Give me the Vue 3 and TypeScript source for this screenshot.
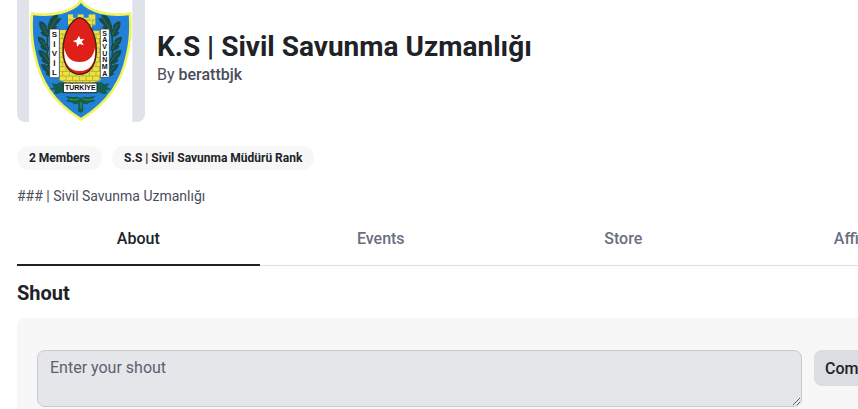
<script setup lang="ts">
import { ref } from 'vue'

interface Tab {
  id: string
  label: string
}

const tabs: Tab[] = [
  { id: 'about', label: 'About' },
  { id: 'events', label: 'Events' },
  { id: 'store', label: 'Store' },
  { id: 'affiliates', label: 'Affiliates' },
]
const activeTab = ref('about')
const shout = ref('')

const leftLetters = [
  { char: 'S', y: 111 },
  { char: 'İ', y: 140 },
  { char: 'V', y: 168 },
  { char: 'İ', y: 197 },
  { char: 'L', y: 226 },
]
const rightLetters = 'SAVUNMA'.split('').map((char, i) => ({ char, y: 107 + i * 20 }))
const brickRows = Array.from({ length: 14 }, (_, i) => 60 + i * 14)
</script>

<template>
  <div class="page">
    <main class="content">
      <header class="group-header">
        <div class="thumbnail">
          <svg class="emblem" viewBox="21 -18 384 384" role="img" aria-label="Sivil Savunma">
            <defs>
              <clipPath id="castle">
                <path d="M174 43h15v10h14v-10h18v10h15v-10h20v33h-10v16h26v148q-28 13-62 13t-62-13V90h33V76h-7z" />
              </clipPath>
              <g id="branch">
                <path d="M120 70Q100 150 123 225" fill="none" stroke="#174b45" stroke-width="5" />
                <path d="M145 44Q124 43 117 65q-7 14-4 30q23 0 29-16l-7-2q14-8 19-24l-11 3z" />
                <path d="M88 64q16 0 22 14l-1 7q12 8 6 27q-19-1-24-16l6-1q-12-12-9-31z" />
                <path d="M83 110q16 0 23 12l-1 6q16 7 11 25q-20 0-26-15l5-2q-12-10-12-26z" />
                <path d="M85 150q17 0 24 12l1 6q13 6 11 24q-20 2-28-13l5-3q-14-10-13-26z" />
                <path d="M93 192q18 0 24 10l1 7q17 2 20 19q-20 7-32-7l4-4q-14-8-17-25z" />
                <path d="M96 73l16 32M92 119l21 28M96 158l22 28M104 199l25 24M141 53l-22 35" fill="none" stroke="#3b8058" stroke-width="2" />
              </g>
            </defs>
            <rect x="57" y="-18" width="310" height="384" fill="#fff" />
            <path
              d="M213 3C190 35 125 51 66 41Q61 111 75 166C91 244 130 307 213 358C296 307 335 244 351 166Q365 111 360 41C301 51 236 35 213 3Z"
              fill="#2280d8"
              stroke="#f3f45c"
              stroke-width="8"
              stroke-linejoin="round"
            />
            <use href="#branch" fill="#174b45" />
            <use href="#branch" fill="#174b45" transform="translate(419 0) scale(-1 1)" />
            <g clip-path="url(#castle)">
              <rect x="140" y="38" width="140" height="220" fill="#eee240" />
              <g stroke="#a59a35" stroke-width="2">
                <path v-for="y in brickRows" :key="y" :d="`M140 ${y}H280`" />
                <path
                  v-for="(y, i) in brickRows"
                  :key="`joint-${y}`"
                  :d="`M${148 + (i % 2) * 10} ${y}v14m20-14v14m20-14v14m20-14v14m20-14v14m20-14v14m20-14v14`"
                />
              </g>
            </g>
            <path d="M209 53C182 57 159 106 159 150C159 194 178 223 209 223C240 223 259 194 259 150C259 106 236 57 209 53Z" fill="#df2018" stroke="#3a2410" stroke-width="4" />
            <path d="M163 143C159 188 177 213 209 213C241 213 259 188 255 143C250 171 234 186 209 186C184 186 168 171 163 143Z" fill="#fff" />
            <path d="M207 107l4 11 12-2-8 9 7 11-13-4-8 8-1-12-12-5 12-4z" fill="#fff" />
            <path d="M119 87h29v146h-29zM271 87h27v145h-27z" fill="#fff" stroke="#26352d" stroke-width="2" />
            <g class="emblem-text">
              <text v-for="letter in leftLetters" :key="letter.y" x="133" :y="letter.y" font-size="24">{{ letter.char }}</text>
              <text v-for="letter in rightLetters" :key="letter.y" x="284" :y="letter.y" font-size="21">{{ letter.char }}</text>
            </g>
            <g fill="#125f4d">
              <path d="M161 249q-13-5-21 3l-15-2 7 12-14 5 17 4-3 10q19 3 29-7zM262 249q13-5 21 3l15-2-7 12 14 5-17 4 3 10q-19 3-29-7z" />
              <path d="M211 295q-10-7-20-3l-24-4 9 10-10 5 21 5 5 5 13-2-1 23 8 4 8-4-1-23 12 2 6-5 20-5-10-5 9-10-21 4q-13-5-24 3z" />
            </g>
            <path d="M178 297q18 6 29-1m40 1q-18 6-29-1M213 306v20" fill="none" stroke="#43a43e" stroke-width="3" />
            <rect x="160" y="249" width="101" height="29" fill="#fff" stroke="#17251f" stroke-width="3" />
            <text class="emblem-text" x="211" y="271" font-size="21">TÜRKİYE</text>
          </svg>
        </div>
        <div class="group-title">
          <h1>K.S | Sivil Savunma Uzmanlığı</h1>
          <p>By <a href="#owner">berattbjk</a></p>
        </div>
      </header>

      <div class="badges">
        <span class="badge">2 Members</span>
        <span class="badge">S.S | Sivil Savunma Müdürü Rank</span>
      </div>
      <p class="description">### | Sivil Savunma Uzmanlığı</p>

      <nav class="tabs" role="tablist">
        <button
          v-for="tab in tabs"
          :key="tab.id"
          type="button"
          role="tab"
          class="tab"
          :class="{ active: activeTab === tab.id }"
          :aria-selected="activeTab === tab.id"
          @click="activeTab = tab.id"
        >
          {{ tab.label }}
        </button>
      </nav>

      <section>
        <h2>Shout</h2>
        <form class="shout-card" @submit.prevent>
          <textarea v-model="shout" aria-label="Enter your shout" placeholder="Enter your shout"></textarea>
          <button type="submit" class="shout-button">Community Shout</button>
        </form>
      </section>
    </main>
  </div>
</template>

<style>
html {
  scrollbar-width: none;
}
body {
  background: #fff;
}
</style>

<style scoped>
.page {
  box-sizing: border-box;
  padding: 0 17px;
  overflow: hidden;
  color: #202227;
  font-family: Roboto, "Noto Sans", sans-serif;
  font-size: 16px;
  line-height: 24px;
}
.content {
  min-width: 970px;
}
h1,
h2,
p {
  margin: 0;
}
button,
textarea {
  font: inherit;
}
.group-header {
  display: flex;
  align-items: center;
  gap: 12px;
  margin-top: -6px;
}
.thumbnail {
  width: 128px;
  height: 128px;
  overflow: hidden;
  border-radius: 8px;
  background: #e0e2e9;
}
.emblem {
  display: block;
  width: 100%;
}
.emblem-text {
  fill: #111;
  font-family: "Liberation Sans", sans-serif;
  font-weight: 700;
  text-anchor: middle;
}
.group-title {
  padding-top: 2px;
}
.group-title h1 {
  font-size: 28px;
  font-weight: 700;
  line-height: 32px;
}
.group-title p {
  color: #494d5a;
}
.group-title a {
  color: inherit;
  font-weight: 500;
  text-decoration: none;
}
.badges {
  display: flex;
  gap: 10px;
  margin-top: 24px;
}
.badge {
  padding: 0 12px;
  border-radius: 12px;
  background: #f7f7f8;
  font-size: 12px;
  font-weight: 700;
}
.description {
  margin-top: 14px;
  color: #494d5a;
  font-size: 14px;
}
.tabs {
  display: flex;
  margin-top: 8px;
  box-shadow: inset 0 -1px #dfe0e3;
}
.tab {
  flex: 1;
  height: 50px;
  padding: 0 0 2px;
  border: 0;
  border-bottom: 2px solid transparent;
  background: none;
  color: #6a6f81;
  font-weight: 500;
}
.tab.active {
  border-color: #202227;
  color: #202227;
}
h2 {
  padding: 13px 0 11px;
  font-size: 20px;
  font-weight: 700;
  line-height: 28px;
}
.shout-card {
  display: flex;
  align-items: flex-start;
  gap: 12px;
  padding: 32px 20px 20px;
  border-radius: 8px;
  background: #f7f7f8;
}
textarea {
  box-sizing: border-box;
  flex: 1;
  height: 57px;
  padding: 5px 12px;
  border: 1px solid #c8cad2;
  border-radius: 8px;
  background: #e5e6ea;
  color: #202227;
  resize: vertical;
}
textarea::placeholder {
  color: #5c6170;
}
.shout-button {
  flex: 0 0 153px;
  height: 36px;
  padding: 2px 11px 0;
  border: 0;
  border-radius: 8px;
  background: #dcdde2;
  color: #202227;
  font-weight: 500;
  text-align: left;
  white-space: nowrap;
}
</style>
